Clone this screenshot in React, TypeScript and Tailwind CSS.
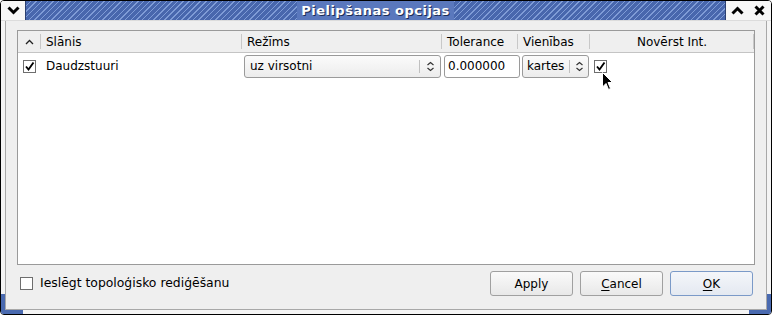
import React from "react";

const font = { fontFamily: '"DejaVu Sans", "Liberation Sans", sans-serif' };

function Check({ checked }: { checked?: boolean }) {
  return (
    <div className="w-[13px] h-[13px] border border-[#6e6e6e] bg-white flex items-center justify-center shrink-0">
      {checked && (
        <svg width="11" height="11" viewBox="0 0 11 11">
          <path d="M2 5.5 L4.5 8.5 L9.5 1.5" stroke="#000" strokeWidth="1.9" fill="none" />
        </svg>
      )}
    </div>
  );
}

function Spinner() {
  return (
    <svg width="9" height="11" viewBox="0 0 9 11">
      <path d="M1.5 4 L4.5 1.5 L7.5 4" stroke="#333" strokeWidth="1.2" fill="none" />
      <path d="M1.5 7 L4.5 9.5 L7.5 7" stroke="#333" strokeWidth="1.2" fill="none" />
    </svg>
  );
}

function HeaderCell({ w, children, center, last }: { w: string; children?: React.ReactNode; center?: boolean; last?: boolean }) {
  return (
    <div className={`${w} h-full flex items-center relative ${center ? "justify-center" : "pl-[5px]"}`}>
      {children}
      {!last && <div className="absolute right-0 top-[3px] bottom-[3px] w-px bg-[#c8c8c8]" />}
    </div>
  );
}

function Button({ children, def }: { children: React.ReactNode; def?: boolean }) {
  return (
    <div
      className={`w-[83px] h-[25px] rounded-[3px] border ${def ? "border-[#7b9ac8] bg-[linear-gradient(#f4f6fa,#e4e9f1)]" : "border-[#a0a0a0] bg-[linear-gradient(#fafafa,#e8e8e8)]"} flex items-center justify-center text-[12px] text-black`}
    >
      {children}
    </div>
  );
}

export default function App() {
  return (
    <div className="w-[772px] h-[315px] bg-white" style={font}>
      <div className="w-[772px] h-[315px] border border-black rounded-[4px] bg-[#efefef] flex flex-col overflow-hidden relative">
        {/* title bar */}
        <div className="h-[20px] flex items-stretch border-b border-[#dcdcdc] bg-[#f4f4f4]">
          <div className="w-[24px] flex items-center justify-center bg-[#f6f6f6]">
            <svg width="13" height="9" viewBox="0 0 13 9">
              <path d="M1.5 1.5 L6.5 6.5 L11.5 1.5" stroke="#000" strokeWidth="3" fill="none" />
            </svg>
          </div>
          <div className="flex-1 flex items-center justify-center bg-[repeating-linear-gradient(135deg,#4867ad_0px,#4867ad_3px,#7f9cd6_3px,#7f9cd6_4px)] border-l border-[#2a3f70]">
            <span
              className="text-white font-bold text-[13px] tracking-[0.5px] px-[4px] bg-[#5a78bd]"
              style={{ textShadow: "1px 1px 0 #1c2c55" }}
            >
              Pielipšanas opcijas
            </span>
          </div>
          <div className="w-[23px] flex items-center justify-center bg-[#f6f6f6] border-l border-[#2a3f70]">
            <svg width="13" height="9" viewBox="0 0 13 9">
              <path d="M1.5 7.5 L6.5 2.5 L11.5 7.5" stroke="#000" strokeWidth="3" fill="none" />
            </svg>
          </div>
          <div className="w-[23px] flex items-center justify-center bg-[#f6f6f6]">
            <svg width="11" height="11" viewBox="0 0 11 11">
              <path d="M1.5 1.5 L9.5 9.5 M9.5 1.5 L1.5 9.5" stroke="#000" strokeWidth="3" fill="none" />
            </svg>
          </div>
        </div>

        {/* body frame */}
        <div className="flex-1 flex flex-col border-x-[4px] border-b-[4px] border-[#f4f4f4]">
          <div className="flex-1 flex flex-col border-x border-b border-[#a8a8a8] px-[11px] pt-[9px] pb-[7px]">
            {/* table */}
            <div className="h-[235px] border border-[#9a9a9a] bg-white flex flex-col text-[12px] text-black">
              <div className="h-[22px] bg-[#efefef] border-b border-[#c4c4c4] flex items-center shrink-0">
                <HeaderCell w="w-[23px]" center>
                  <svg width="9" height="6" viewBox="0 0 9 6">
                    <path d="M1 5 L4.5 1.5 L8 5" stroke="#222" strokeWidth="1.3" fill="none" />
                  </svg>
                </HeaderCell>
                <HeaderCell w="w-[201px]">Slānis</HeaderCell>
                <HeaderCell w="w-[200px]">Režīms</HeaderCell>
                <HeaderCell w="w-[76px]">Tolerance</HeaderCell>
                <HeaderCell w="w-[72px]">Vienības</HeaderCell>
                <HeaderCell w="w-[164px]" center>
                  Novērst Int.
                </HeaderCell>
              </div>
              <div className="h-[26px] flex items-center relative">
                <div className="w-[23px] flex justify-center pr-[1px]">
                  <Check checked />
                </div>
                <div className="w-[203px] pl-[5px]">Daudzstuuri</div>
                <div className="w-[197px] h-[23px] rounded-[3px] border border-[#9a9a9a] bg-[linear-gradient(#fbfbfb,#ececec)] flex items-center">
                  <span className="flex-1 pl-[5px]">uz virsotni</span>
                  <div className="w-px h-[13px] bg-[#c0c0c0]" />
                  <div className="w-[20px] flex justify-center">
                    <Spinner />
                  </div>
                </div>
                <div className="w-[76px] h-[23px] ml-[3px] rounded-[3px] border border-[#9a9a9a] bg-white flex items-center pl-[3px]">
                  0.000000
                </div>
                <div className="w-[67px] h-[23px] ml-[2px] rounded-[3px] border border-[#9a9a9a] bg-[linear-gradient(#fbfbfb,#ececec)] flex items-center">
                  <span className="flex-1 pl-[4px]">kartes</span>
                  <div className="w-px h-[13px] bg-[#c0c0c0]" />
                  <div className="w-[18px] flex justify-center">
                    <Spinner />
                  </div>
                </div>
                <div className="ml-[5px]">
                  <Check checked />
                </div>
                <svg className="absolute left-[584px] top-[19px]" width="12" height="19" viewBox="0 0 12 19">
                  <path d="M0.5 0.5 L0.5 15 L4 11.5 L6.5 17.5 L8.5 16.5 L6 10.5 L10.5 10.5 Z" fill="#000" stroke="#fff" strokeWidth="1" />
                </svg>
              </div>
            </div>

            {/* bottom row */}
            <div className="flex items-center mt-[6px] h-[25px]">
              <div className="flex items-center gap-[7px] pl-[3px] text-[12.4px] text-black">
                <Check />
                <span>Ieslēgt topoloģisko rediģēšanu</span>
              </div>
              <div className="ml-auto flex gap-[7px] mr-[2px]">
                <Button>Apply</Button>
                <Button>
                  <span className="underline underline-offset-2">C</span>ancel
                </Button>
                <Button def>
                  <span className="underline underline-offset-2">O</span>K
                </Button>
              </div>
            </div>
          </div>
        </div>
        {/* blue corner accents */}
        <div className="absolute left-0 bottom-0 w-[22px] h-[4px] bg-[#4a6ab0]" />
        <div className="absolute left-0 bottom-0 w-[4px] h-[20px] bg-[#4a6ab0]" />
        <div className="absolute right-0 bottom-0 w-[22px] h-[4px] bg-[#4a6ab0]" />
        <div className="absolute right-0 bottom-0 w-[4px] h-[20px] bg-[#4a6ab0]" />
      </div>
    </div>
  );
}
